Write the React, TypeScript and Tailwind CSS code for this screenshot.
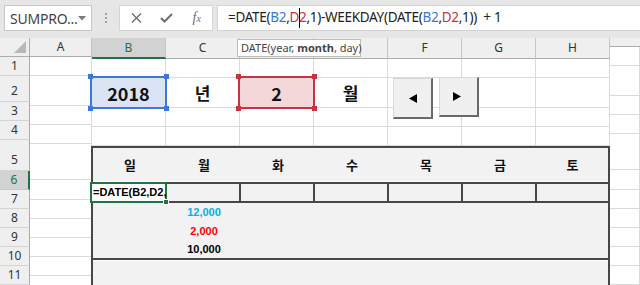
import React from 'react';

type RowDef = { n: number; h: string; tall?: boolean; sel?: boolean };

const ROWS: RowDef[] = [
  { n: 1, h: 'h-[19px]' },
  { n: 2, h: 'h-[30px]', tall: true },
  { n: 3, h: 'h-[19px]' },
  { n: 4, h: 'h-[19px]' },
  { n: 5, h: 'h-[36px]', tall: true },
  { n: 6, h: 'h-[20px]', sel: true },
  { n: 7, h: 'h-[19px]' },
  { n: 8, h: 'h-[19px]' },
  { n: 9, h: 'h-[19px]' },
  { n: 10, h: 'h-[19px]' },
  { n: 11, h: 'h-[19px]' },
];

const COLS = ['B', 'C', 'D', 'E', 'F', 'G', 'H'];
const DAYS = ['일', '월', '화', '수', '목', '금', '토'];

function RowHeader({ r }: { r: RowDef }) {
  if (r.sel) {
    return (
      <div className={`${r.h} flex items-center justify-center border-b border-[#c6c6c6] border-r-2 border-r-[#217346] bg-[#d2d2d2] text-[12px] text-[#217346]`}>
        {r.n}
      </div>
    );
  }
  return (
    <div
      className={`${r.h} flex justify-center border-b border-r border-b-[#d4d4d4] border-r-[#ababab] bg-[#efefef] text-[12px] text-[#333] ${r.tall ? 'items-end pb-[1px]' : 'items-center'}`}
    >
      {r.n}
    </div>
  );
}

function GridCell({ h, w, children }: { h: string; w: string; children?: React.ReactNode }) {
  return <div className={`${h} ${w} shrink-0 border-r border-b border-[#dadada]`}>{children}</div>;
}

function Highlight({ text, tone }: { text: string; tone: 'blue' | 'red' }) {
  const frame =
    tone === 'blue'
      ? 'border-[#3b78d8] bg-[#dae4f4]'
      : 'border-[#c9333c] bg-[#f4d8d9]';
  const dot = tone === 'blue' ? 'bg-[#3b78d8]' : 'bg-[#c9333c]';
  return (
    <div className={`absolute -left-[2px] -top-[2px] -right-[2px] -bottom-[2px] z-10 border-2 ${frame} flex items-center justify-center`}>
      <span className="font-['Noto_Sans_CJK_KR',sans-serif] text-[18px] font-bold text-[#111] leading-none">{text}</span>
      <span className={`absolute -left-[4px] -top-[4px] w-[5px] h-[5px] ${dot}`} />
      <span className={`absolute -right-[4px] -top-[4px] w-[5px] h-[5px] ${dot}`} />
      <span className={`absolute -left-[4px] -bottom-[4px] w-[5px] h-[5px] ${dot}`} />
      <span className={`absolute -right-[4px] -bottom-[4px] w-[5px] h-[5px] ${dot}`} />
    </div>
  );
}

function Toolbar() {
  return (
    <div className="h-[38px] bg-[#e6e6e6] flex items-start pt-[5px]">
      <div className="ml-[4px] w-[88px] h-[26px] bg-white border border-[#c6c6c6] flex items-center justify-between pl-[5px] pr-[5px]">
        <span className="text-[14px] text-[#444] tracking-[-0.2px]">SUMPRO...</span>
        <svg width="8" height="5" viewBox="0 0 8 5">
          <polygon points="0,0 8,0 4,4.5" fill="#7a7a7a" />
        </svg>
      </div>
      <div className="w-[27px] h-[26px] flex flex-col items-center justify-center gap-[2px]">
        <span className="w-[2px] h-[2px] bg-[#a0a0a0]" />
        <span className="w-[2px] h-[2px] bg-[#a0a0a0]" />
        <span className="w-[2px] h-[2px] bg-[#a0a0a0]" />
      </div>
      <div className="w-[94px] h-[26px] bg-white border border-[#d4d4d4] flex items-center">
        <div className="w-[31px] flex justify-center pl-[2px]">
          <svg width="11" height="10" viewBox="0 0 11 10">
            <path d="M1 0.5 L10 9.5 M10 0.5 L1 9.5" stroke="#6e6e6e" strokeWidth="1.4" fill="none" />
          </svg>
        </div>
        <div className="w-[31px] flex justify-center">
          <svg width="13" height="10" viewBox="0 0 13 10">
            <path d="M1 5 L4.5 8.5 L12 1" stroke="#6e6e6e" strokeWidth="2" fill="none" />
          </svg>
        </div>
        <div className="w-[31px] flex justify-center">
          <span className="font-['Liberation_Serif',serif] italic text-[14px] text-[#6e6e6e] leading-none">
            f<span className="text-[10px]">x</span>
          </span>
        </div>
      </div>
      <div className="ml-[4px] flex-1 h-[26px] bg-white border border-r-0 border-[#d4d4d4] flex items-center pl-[10px]">
        <span className="text-[13.5px] tracking-[-0.3px] text-[#222] whitespace-pre leading-none">
          =DATE(<span className="text-[#3b78d8]">B2</span>,<span className="text-[#c9333c]">D</span>
          <span className="inline-block w-px h-[20px] bg-black align-middle -mx-[0.5px]" />
          <span className="text-[#c9333c]">2</span>,1)-WEEKDAY(DATE(<span className="text-[#3b78d8]">B2</span>,
          <span className="text-[#c9333c]">D2</span>{',1))  + 1'}
        </span>
      </div>
    </div>
  );
}

export default function App() {
  const colW = ['w-[74px]', 'w-[74px]', 'w-[74px]', 'w-[74px]', 'w-[74px]', 'w-[74px]', 'w-[71px]'];
  return (
    <div className="relative w-[640px] h-[285px] overflow-hidden bg-white font-['Noto_Sans','Noto_Sans_CJK_KR',sans-serif]">
      <Toolbar />
      <div className="flex h-[247px] overflow-hidden">
        {/* Row headers */}
        <div className="w-[30px] shrink-0 flex flex-col">
          <div className="h-[21px] bg-[#efefef] border-r border-b border-r-[#ababab] border-b-[#ababab] flex items-end justify-end pr-[3px] pb-[3px]">
            <svg width="12" height="12" viewBox="0 0 12 12">
              <polygon points="12,0 12,12 0,12" fill="#b8b8b8" />
            </svg>
          </div>
          {ROWS.map((r) => (
            <RowHeader key={r.n} r={r} />
          ))}
        </div>
        {/* Column A */}
        <div className="w-[62px] shrink-0 flex flex-col">
          <div className="h-[21px] bg-[#efefef] border-r border-b border-r-[#c6c6c6] border-b-[#ababab] flex items-center justify-center text-[12px] text-[#333]">
            A
          </div>
          {ROWS.map((r) => (
            <GridCell key={r.n} h={r.h} w="w-full" />
          ))}
        </div>
        {/* Columns B-H */}
        <div className="w-[518px] shrink-0 flex flex-col">
          <div className="h-[21px] flex">
            {COLS.map((c) =>
              c === 'B' ? (
                <div key={c} className="w-[74px] h-[21px] bg-[#d2d2d2] border-r border-r-[#c6c6c6] border-b-2 border-b-[#217346] flex items-center justify-center text-[12px] text-[#217346]">
                  {c}
                </div>
              ) : (
                <div key={c} className="w-[74px] h-[21px] bg-[#efefef] border-r border-r-[#c6c6c6] border-b border-b-[#ababab] flex items-center justify-center text-[12px] text-[#333]">
                  {c}
                </div>
              )
            )}
          </div>
          {/* row 1 */}
          <div className="flex">
            {COLS.map((c) => (
              <GridCell key={c} h="h-[19px]" w="w-[74px]" />
            ))}
          </div>
          {/* row 2 */}
          <div className="flex">
            <div className="relative h-[30px] w-[74px] border-r border-b border-[#dadada]">
              <Highlight text="2018" tone="blue" />
            </div>
            <div className="h-[30px] w-[74px] border-r border-b border-[#dadada] flex items-center justify-center font-['Noto_Sans_CJK_KR',sans-serif] text-[17px] font-bold text-[#111]">
              년
            </div>
            <div className="relative h-[30px] w-[74px] border-r border-b border-[#dadada]">
              <Highlight text="2" tone="red" />
            </div>
            <div className="h-[30px] w-[74px] border-r border-b border-[#dadada] flex items-center justify-center font-['Noto_Sans_CJK_KR',sans-serif] text-[17px] font-bold text-[#111]">
              월
            </div>
            <GridCell h="h-[30px]" w="w-[74px]" />
            <GridCell h="h-[30px]" w="w-[74px]" />
            <GridCell h="h-[30px]" w="w-[74px]" />
          </div>
          {/* rows 3-4 */}
          <div className="flex">
            {COLS.map((c) => (
              <GridCell key={c} h="h-[19px]" w="w-[74px]" />
            ))}
          </div>
          <div className="flex">
            {COLS.map((c) => (
              <GridCell key={c} h="h-[19px]" w="w-[74px]" />
            ))}
          </div>
          {/* calendar table */}
          <div className="-ml-px w-[519px] h-[160px] shrink-0 bg-[#f2f2f2] border-x-2 border-t-2 border-[#474747] flex flex-col">
            <div className="h-[34px] shrink-0 flex border-b border-white">
              {DAYS.map((d, i) => (
                <div key={d + i} className={`${colW[i]} shrink-0 flex items-center justify-center font-['Noto_Sans_CJK_KR',sans-serif] text-[13px] font-bold text-[#111]`}>
                  {d}
                </div>
              ))}
            </div>
            <div className="h-[21px] shrink-0 flex border-y-2 border-[#474747]">
              <div className="relative w-[74px] shrink-0 border-r-2 border-[#474747]">
                <div className="absolute -left-[3px] -top-[2px] -right-[2px] -bottom-[2px] z-10 bg-white border-2 border-[#217346] flex items-center pl-[1px] overflow-visible">
                  <span className="font-['Liberation_Sans',sans-serif] text-[11px] font-bold text-black whitespace-nowrap leading-none">
                    =DATE(B2,D2,
                  </span>
                  <span className="absolute -right-[4px] -bottom-[4px] w-[6px] h-[6px] bg-[#217346] border border-white" />
                </div>
              </div>
              <div className="w-[74px] shrink-0 border-r-2 border-[#474747]" />
              <div className="w-[74px] shrink-0 border-r-2 border-[#474747]" />
              <div className="w-[74px] shrink-0 border-r-2 border-[#474747]" />
              <div className="w-[74px] shrink-0 border-r-2 border-[#474747]" />
              <div className="w-[74px] shrink-0 border-r-2 border-[#474747]" />
              <div className="flex-1" />
            </div>
            <div className="h-[57px] shrink-0 flex flex-col border-b-2 border-[#474747]">
              <div className="h-[19px] flex">
                <div className="w-[74px]" />
                <div className="w-[74px] flex items-center justify-center font-['Liberation_Sans',sans-serif] text-[11px] font-bold text-[#00b0f0]">
                  12,000
                </div>
              </div>
              <div className="h-[18px] flex">
                <div className="w-[74px]" />
                <div className="w-[74px] flex items-center justify-center font-['Liberation_Sans',sans-serif] text-[11px] font-bold text-[#ff0000]">
                  2,000
                </div>
              </div>
              <div className="h-[18px] flex">
                <div className="w-[74px]" />
                <div className="w-[74px] flex items-center justify-center font-['Liberation_Sans',sans-serif] text-[11px] font-bold text-black">
                  10,000
                </div>
              </div>
            </div>
            <div className="flex-1 border-t border-white" />
          </div>
        </div>
        {/* Column I */}
        <div className="flex-1 flex flex-col">
          <div className="h-[21px] bg-[#efefef] border-b border-b-[#ababab]" />
          {ROWS.map((r) => (
            <GridCell key={r.n} h={r.h} w="w-full" />
          ))}
        </div>
      </div>

      {/* Tooltip */}
      <div className="absolute left-[237px] top-[39px] w-[124px] h-[18px] bg-white border border-[#bcbcbc] flex items-center pl-[3px] text-[11px] text-[#444] whitespace-pre z-20">
        {'DATE(year, '}
        <span className="font-bold">month</span>
        {', day)'}
      </div>

      {/* Spin buttons (form controls) */}
      <div className="absolute left-[393px] top-[78px] w-[40px] h-[41px] bg-[#f0f0f0] border-t border-l border-[#d8d8d8] border-r-2 border-b-2 border-r-[#696969] border-b-[#696969] flex items-center justify-center z-20">
        <svg width="8" height="9" viewBox="0 0 8 9">
          <polygon points="8,0 8,9 0,4.5" fill="#000" />
        </svg>
      </div>
      <div className="absolute left-[439px] top-[77px] w-[40px] h-[40px] bg-[#f0f0f0] border-t border-l border-[#d8d8d8] border-r-2 border-b-2 border-r-[#696969] border-b-[#696969] flex items-center justify-center pr-[4px] z-20">
        <svg width="8" height="9" viewBox="0 0 8 9">
          <polygon points="0,0 0,9 8,4.5" fill="#000" />
        </svg>
      </div>
    </div>
  );
}
